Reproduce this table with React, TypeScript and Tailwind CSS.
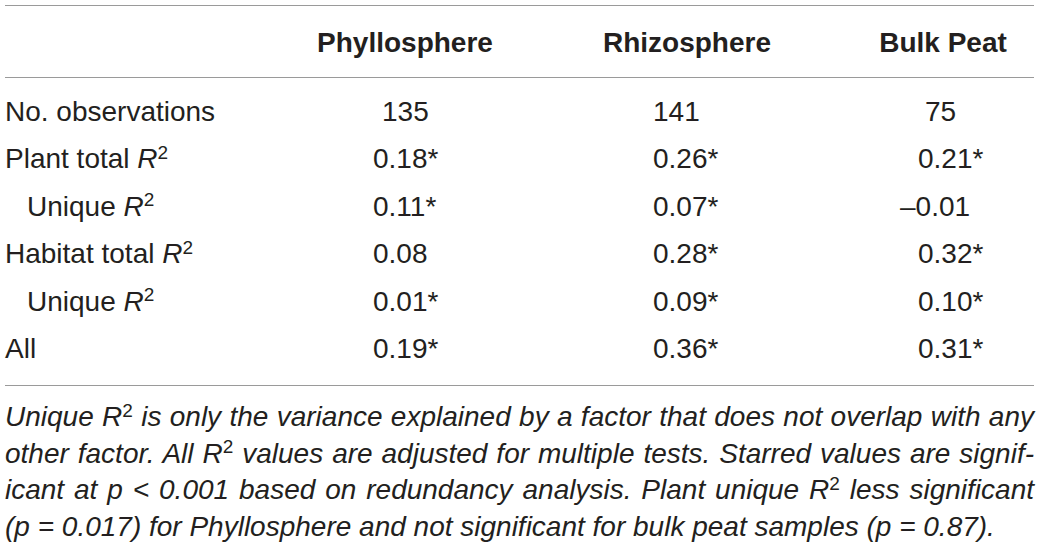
import React from "react";

const R2 = () => (
  <>
    <span className="italic">R</span>
    <sup className="text-[19px] not-italic">2</sup>
  </>
);

type Row = {
  label: React.ReactNode;
  indent?: boolean;
  vals: React.ReactNode[];
};

const rows: Row[] = [
  {
    label: "No. observations",
    vals: [
      <span className="pl-[9px]">135</span>,
      <span className="pl-0">141</span>,
      <span className="pl-[7px]">75</span>,
    ],
  },
  {
    label: (
      <>
        Plant total <R2 />
      </>
    ),
    vals: ["0.18*", "0.26*", "0.21*"],
  },
  {
    label: (
      <>
        Unique <R2 />
      </>
    ),
    indent: true,
    vals: [
      "0.11*",
      "0.07*",
      <span className="-ml-[18px]">–0.01</span>,
    ],
  },
  {
    label: (
      <>
        Habitat total <R2 />
      </>
    ),
    vals: ["0.08", "0.28*", "0.32*"],
  },
  {
    label: (
      <>
        Unique <R2 />
      </>
    ),
    indent: true,
    vals: ["0.01*", "0.09*", "0.10*"],
  },
  {
    label: "All",
    vals: ["0.19*", "0.36*", "0.31*"],
  },
];

const CR2 = () => (
  <>
    R<sup className="text-[19px] not-italic">2</sup>
  </>
);

export default function App() {
  return (
    <div
      className="w-[1041px] h-[551px] bg-white text-[#231f20] overflow-hidden"
      style={{ fontFamily: '"Liberation Sans", Arial, sans-serif' }}
    >
      <div className="ml-[5px] w-[1029px] pt-[5px]">
        <div className="h-px bg-[#9a9a9a]" />
        <div className="grid grid-cols-[300px_200px_364px_148px] pt-[17px] pb-[14px] text-[28px] leading-[40px] font-bold">
          <div />
          <div className="text-center whitespace-nowrap">Phyllosphere</div>
          <div className="text-center whitespace-nowrap">Rhizosphere</div>
          <div className="text-center whitespace-nowrap">Bulk Peat</div>
        </div>
        <div className="h-px bg-[#9a9a9a]" />
        <div className="pt-[9.5px] pb-[12px] text-[28px] leading-[47.6px]">
          {rows.map((r, i) => (
            <div
              key={i}
              className="grid grid-cols-[368px_280px_265px_1fr] whitespace-nowrap"
            >
              <div className={r.indent ? "pl-[22px]" : ""}>{r.label}</div>
              {r.vals.map((v, j) => (
                <div key={j}>{v}</div>
              ))}
            </div>
          ))}
        </div>
        <div className="h-px bg-[#9a9a9a]" />
        <div className="mt-[13px] italic text-[28px] leading-[36.7px] whitespace-nowrap">
          <div className="text-justify [text-align-last:justify]">
            Unique <CR2 /> is only the variance explained by a factor that does not overlap with any
          </div>
          <div className="text-justify [text-align-last:justify]">
            other factor. All <CR2 /> values are adjusted for multiple tests. Starred values are signif-
          </div>
          <div className="text-justify [text-align-last:justify]">
            icant at p &lt; 0.001 based on redundancy analysis. Plant unique <CR2 /> less significant
          </div>
          <div>
            (p = 0.017) for Phyllosphere and not significant for bulk peat samples (p = 0.87).
          </div>
        </div>
      </div>
    </div>
  );
}
